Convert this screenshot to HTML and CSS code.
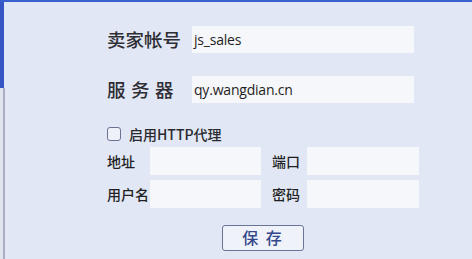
FILE: index.html
```html
<!DOCTYPE html>
<html>
<head>
<meta charset="utf-8">
<link rel="stylesheet" href="styles.css">
</head>
<body>
<div class="frame">
  <div class="edge">
    <div class="edge-top"></div>
    <div class="edge-bottom"></div>
  </div>
  <div class="content">
    <div class="row big first">
      <span class="big-label">卖家帐号</span>
      <div class="field wide">js_sales</div>
    </div>
    <div class="row big second">
      <span class="big-label spaced">服务器</span>
      <div class="field wide">qy.wangdian.cn</div>
    </div>
    <div class="check-row">
      <span class="checkbox"></span>
      <span class="check-text">启用HTTP代理</span>
    </div>
    <div class="proxy">
      <span class="small-label">地址</span>
      <div class="field s1"></div>
      <span class="small-label l2">端口</span>
      <div class="field s2"></div>
      <span class="small-label">用户名</span>
      <div class="field s1"></div>
      <span class="small-label l2">密码</span>
      <div class="field s2"></div>
    </div>
    <div class="btn-row">
      <div class="btn">保 存</div>
    </div>
  </div>
</div>
</body>
</html>
```
FILE: styles.css
```css
html, body {
  margin: 0;
  padding: 0;
}
body {
  width: 472px;
  height: 259px;
  overflow: hidden;
  background: #e1e7f4;
  font-family: "Noto Sans CJK SC", "Noto Sans", sans-serif;
  color: #2a2a2e;
}
.frame {
  display: flex;
  height: 257px;
  border-top: 2px solid #3b5fcf;
}
.edge {
  width: 5px;
  display: flex;
  flex-direction: column;
}
.edge-top {
  height: 86px;
  width: 4px;
  background: #3555c4;
}
.edge-bottom {
  flex: 1;
  width: 3px;
  background: #dfe4ef;
  border-right: 2px solid #a7aec4;
}
.content {
  flex: 1;
  padding-left: 102px;
  display: flex;
  flex-direction: column;
}
.row {
  display: flex;
  align-items: center;
}
.first {
  margin-top: 24px;
}
.second {
  margin-top: 23px;
}
.big-label {
  width: 85px;
  font-size: 18.5px;
  font-weight: 500;
  line-height: 27px;
  color: #2e2e34;
}
.spaced {
  letter-spacing: 5.5px;
}
.field {
  background: #f6f7fa;
  box-sizing: border-box;
}
.wide {
  width: 222px;
  height: 27px;
  font-family: "Open Sans", "Noto Sans", sans-serif;
  font-size: 14px;
  line-height: 27px;
  padding-left: 2px;
  color: #1e1e22;
  letter-spacing: -0.2px;
}
.check-row {
  display: flex;
  align-items: center;
  margin-top: 24px;
  height: 14px;
}
.checkbox {
  width: 14px;
  height: 14px;
  box-sizing: border-box;
  border: 1.5px solid #6b7294;
  border-radius: 3px;
  background: #eef1f8;
}
.check-text {
  margin-left: 8px;
  font-size: 14px;
  font-weight: 500;
  line-height: 14px;
  color: #2a2a2e;
}
.proxy {
  display: grid;
  grid-template-columns: 43px 111px 46px 112px;
  grid-template-rows: 28px 28px;
  row-gap: 5px;
  align-items: center;
  margin-top: 6px;
}
.small-label {
  font-size: 14px;
  font-weight: 500;
  color: #1f1f24;
  white-space: nowrap;
}
.l2 {
  padding-left: 11px;
}
.s1, .s2 {
  height: 28px;
}
.btn-row {
  display: flex;
  margin-top: 17px;
  padding-left: 115px;
}
.btn {
  width: 82px;
  height: 26px;
  box-sizing: border-box;
  border: 1.5px solid #6a7496;
  border-radius: 3px;
  background: #eff2f9;
  color: #34478a;
  font-size: 16px;
  font-weight: 500;
  line-height: 23px;
  text-align: center;
  letter-spacing: 2px;
}
```
